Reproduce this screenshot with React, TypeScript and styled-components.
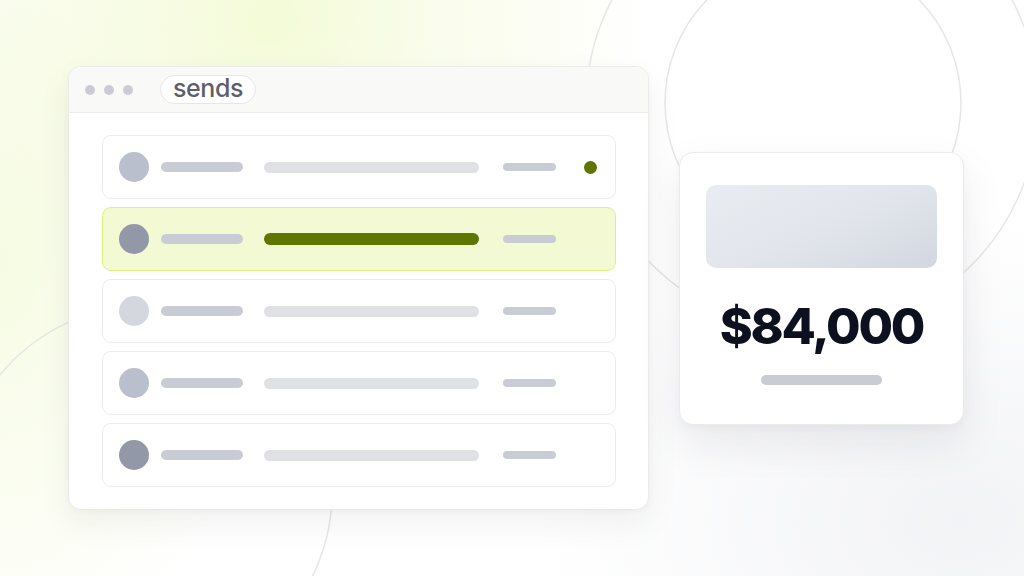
import React from "react";
import styled, { createGlobalStyle } from "styled-components";

const Global = createGlobalStyle`
  html, body { margin: 0; padding: 0; }
  body {
    width: 1024px; height: 576px; overflow: hidden;
    font-family: Inter, "Noto Sans", sans-serif;
    background: #ffffff;
  }
`;

const Stage = styled.div`
  position: relative;
  width: 1024px;
  height: 576px;
  overflow: hidden;
  background:
    radial-gradient(ellipse 380px 320px at 270px 20px, rgba(242, 250, 208, 0.85) 0%, rgba(245, 251, 220, 0.55) 45%, rgba(255, 255, 255, 0) 100%),
    radial-gradient(ellipse 260px 440px at 0px 260px, rgba(245, 251, 222, 0.85) 0%, rgba(255, 255, 255, 0) 100%),
    radial-gradient(ellipse 420px 300px at 960px 520px, rgba(238, 239, 243, 0.75) 0%, rgba(255, 255, 255, 0) 100%),
    #ffffff;
`;

const Rings = styled.svg`
  position: absolute;
  inset: 0;
  width: 1024px;
  height: 576px;
  pointer-events: none;
`;

const Scene = styled.div`
  position: relative;
  display: flex;
  align-items: flex-start;
  gap: 30px;
  padding: 66px 0 0 68px;
`;

const Window = styled.div`
  width: 581px;
  height: 444px;
  box-sizing: border-box;
  background: #ffffff;
  border: 1.5px solid #ebebe8;
  border-radius: 13px;
  box-shadow: 0 14px 34px rgba(30, 30, 40, 0.06), 0 2px 6px rgba(30, 30, 40, 0.03);
  overflow: hidden;
  display: flex;
  flex-direction: column;
`;

const TitleBar = styled.div`
  height: 45px;
  flex: none;
  background: #f9f9f7;
  border-bottom: 1.5px solid #ececea;
  display: flex;
  align-items: center;
  padding-left: 16px;
  gap: 9px;
`;

const Dot = styled.span`
  width: 10px;
  height: 10px;
  border-radius: 50%;
  background: #cbccd3;
`;

const Pill = styled.div`
  margin-left: 18px;
  height: 29px;
  box-sizing: border-box;
  padding: 0 12px;
  border: 1.5px solid #e6e6e2;
  border-radius: 15px;
  background: #ffffff;
  display: flex;
  align-items: center;
  font-size: 25px;
  font-weight: 500;
  color: #5d606b;
  letter-spacing: -0.4px;
  line-height: 1;
  padding-bottom: 2px;
`;

const List = styled.div`
  display: flex;
  flex-direction: column;
  gap: 8px;
  padding: 22px 32px 0 33px;
`;

const Row = styled.div<{ $active?: boolean }>`
  height: 64px;
  box-sizing: border-box;
  border-radius: 9px;
  border: ${(p) => (p.$active ? "1.5px solid #def07a" : "1.5px solid #ebebea")};
  background: ${(p) => (p.$active ? "#f3f9d3" : "#ffffff")};
  display: flex;
  align-items: center;
  padding-left: 16px;
`;

const Avatar = styled.span<{ $tone: string }>`
  width: 30px;
  height: 30px;
  border-radius: 50%;
  background: ${(p) => p.$tone};
  flex: none;
`;

const Bar = styled.span<{ $w: number; $h: number; $color: string; $gap: number }>`
  width: ${(p) => p.$w}px;
  height: ${(p) => p.$h}px;
  border-radius: ${(p) => p.$h / 2}px;
  background: ${(p) => p.$color};
  margin-left: ${(p) => p.$gap}px;
  flex: none;
`;

const StatusDot = styled.span`
  width: 13px;
  height: 13px;
  border-radius: 50%;
  background: #5f7500;
  margin-left: 28px;
`;

const Card = styled.div`
  margin-top: 86px;
  width: 285px;
  height: 273px;
  box-sizing: border-box;
  background: #ffffff;
  border: 1.5px solid #ebebe8;
  border-radius: 14px;
  box-shadow: 0 18px 44px rgba(30, 30, 45, 0.08), 0 3px 8px rgba(30, 30, 45, 0.03);
  display: flex;
  flex-direction: column;
  align-items: center;
  padding: 32px 26px 0;
`;

const Hero = styled.div`
  width: 231px;
  height: 83px;
  border-radius: 10px;
  background: linear-gradient(155deg, #e9ecf1 0%, #e2e6ec 50%, #d2d7e0 100%);
`;

const Amount = styled.div`
  margin-top: 28px;
  font-size: 50px;
  font-weight: 800;
  color: #0d111f;
  letter-spacing: -2.2px;
  line-height: 60px;
`;

const Caption = styled.span`
  margin-top: 19px;
  width: 121px;
  height: 10px;
  border-radius: 5px;
  background: #c9ccd4;
`;

const rows = [
  { tone: "#b9bfcc", active: false, dot: true },
  { tone: "#9298a8", active: true, dot: false },
  { tone: "#d4d7de", active: false, dot: false },
  { tone: "#b9bfcc", active: false, dot: false },
  { tone: "#9298a8", active: false, dot: false },
];

export default function App() {
  return (
    <>
      <Global />
      <Stage>
        <Rings viewBox="0 0 1024 576">
          <g fill="none" stroke="#e6e6e3" strokeWidth="1.5">
            <circle cx="812" cy="105" r="226" />
            <circle cx="813" cy="103" r="148" />
            <circle cx="145" cy="493" r="187" />
          </g>
        </Rings>
        <Scene>
          <Window>
            <TitleBar>
              <Dot />
              <Dot />
              <Dot />
              <Pill>sends</Pill>
            </TitleBar>
            <List>
              {rows.map((r, i) => (
                <Row key={i} $active={r.active}>
                  <Avatar $tone={r.tone} />
                  <Bar $w={82} $h={10} $color="#c9ccd4" $gap={12} />
                  <Bar
                    $w={215}
                    $h={r.active ? 12 : 11}
                    $color={r.active ? "#5f7500" : "#e0e1e5"}
                    $gap={21}
                  />
                  <Bar $w={53} $h={8} $color="#c9ccd4" $gap={24} />
                  {r.dot && <StatusDot />}
                </Row>
              ))}
            </List>
          </Window>
          <Card>
            <Hero />
            <Amount>$84,000</Amount>
            <Caption />
          </Card>
        </Scene>
      </Stage>
    </>
  );
}
